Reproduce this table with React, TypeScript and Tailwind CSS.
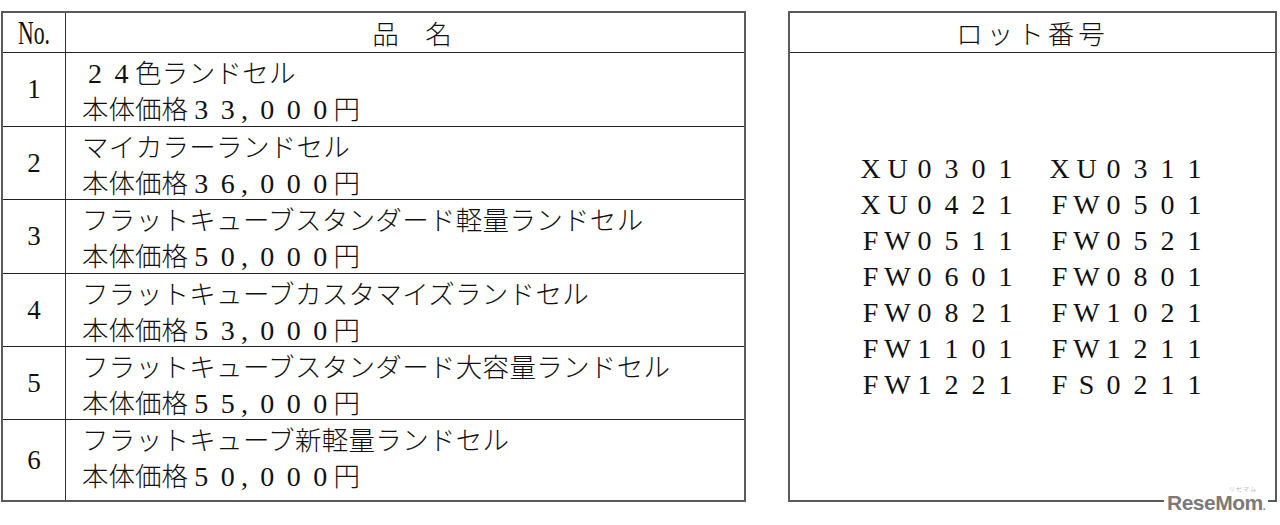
import React from "react";

const serif = "font-['Liberation_Serif','Times_New_Roman',serif]";

// full-width digits / latin are drawn like the Mincho doc: serif glyph in a 1em box
const Fw = ({ text }: { text: string }) => (
  <>
    {text.split("").map((ch, i) => {
      const code = ch.charCodeAt(0);
      if (code >= 0xff01 && code <= 0xff5e) {
        return (
          <span key={i} className={`inline-block w-[26.5px] text-center text-[28px] leading-none ${serif}`}>
            {String.fromCharCode(code - 0xfee0)}
          </span>
        );
      }
      if (ch === ",") {
        return (
          <span key={i} className={`inline-block w-[13px] text-left text-[28px] leading-none ${serif}`}>
            ,
          </span>
        );
      }
      return <span key={i}>{ch}</span>;
    })}
  </>
);

const products = [
  { no: "1", name: "２４色ランドセル", price: "本体価格３３,０００円", h: "h-[74px]" },
  { no: "2", name: "マイカラーランドセル", price: "本体価格３６,０００円", h: "h-[73px]" },
  { no: "3", name: "フラットキューブスタンダード軽量ランドセル", price: "本体価格５０,０００円", h: "h-[74px]" },
  { no: "4", name: "フラットキューブカスタマイズランドセル", price: "本体価格５３,０００円", h: "h-[73px]" },
  { no: "5", name: "フラットキューブスタンダード大容量ランドセル", price: "本体価格５５,０００円", h: "h-[73px]" },
  { no: "6", name: "フラットキューブ新軽量ランドセル", price: "本体価格５０,０００円", h: "flex-1" },
];

const lots = [
  ["XU0301", "XU0311"],
  ["XU0421", "FW0501"],
  ["FW0511", "FW0521"],
  ["FW0601", "FW0801"],
  ["FW0821", "FW1021"],
  ["FW1101", "FW1211"],
  ["FW1221", "FS0211"],
];

const Lot = ({ code }: { code: string }) => (
  <span className="inline-flex">
    {code.split("").map((c, i) => (
      <span key={i} className="inline-block w-[27px] text-center">
        {c}
      </span>
    ))}
  </span>
);

export default function App() {
  return (
    <div className="relative w-[1280px] h-[525px] bg-white text-[#111] font-['Noto_Sans_CJK_JP',sans-serif] font-light">
      <div className="flex items-start pt-[11px] pl-px gap-[42px]">
        {/* product table */}
        <div className="w-[745px] h-[491px] border-2 border-[#5a5a5a] flex flex-col">
          <div className="h-[40px] flex border-b border-[#222]">
            <div className="w-[63px] border-r border-[#333] flex items-center justify-center">
              <span className={`inline-block text-[34px] leading-none scale-x-[0.64] ${serif}`}>
                No.
              </span>
            </div>
            <div className="flex-1 flex items-center justify-center pl-[14px] text-[26.5px]">
              品　名
            </div>
          </div>

          {products.map((p, i) => (
            <div
              key={p.no}
              className={`${p.h} flex ${i < products.length - 1 ? "border-b border-[#222]" : ""}`}
            >
              <div
                className={`w-[63px] border-r border-[#333] flex items-center justify-center text-[27px] ${serif}`}
              >
                {p.no}
              </div>
              <div className="flex-1 pl-[16px] text-[26.5px] leading-[36px] pt-px whitespace-nowrap">
                <div className="tracking-[0.3px]">
                  <Fw text={p.name} />
                </div>
                <div>
                  <Fw text={p.price} />
                </div>
              </div>
            </div>
          ))}
        </div>

        {/* lot numbers */}
        <div className="w-[489px] h-[491px] border-2 border-[#5a5a5a] flex flex-col">
          <div className="h-[40px] border-b border-[#222] flex items-center justify-center text-[26.5px] tracking-[4px]">
            ロット番号
          </div>
          <div className="flex-1 flex items-center justify-center">
            <div className={`text-[28px] leading-[36px] ${serif}`}>
              {lots.map(([a, b]) => (
                <div key={a} className="flex gap-[27px]">
                  <Lot code={a} />
                  <Lot code={b} />
                </div>
              ))}
            </div>
          </div>
        </div>
      </div>

      {/* watermark */}
      <div className="absolute left-[1164px] top-[486px] bg-white px-[3px] flex flex-col items-end leading-none">
        <span className="text-[6px] text-[#999] tracking-[1px] mr-[8px]">リセマム</span>
        <span className="font-['Liberation_Sans',Arial,sans-serif] font-bold text-[21px] text-[#7a7a7a] tracking-[-0.5px]">
          ReseMom<span className="text-[10px]">.</span>
        </span>
      </div>
    </div>
  );
}
